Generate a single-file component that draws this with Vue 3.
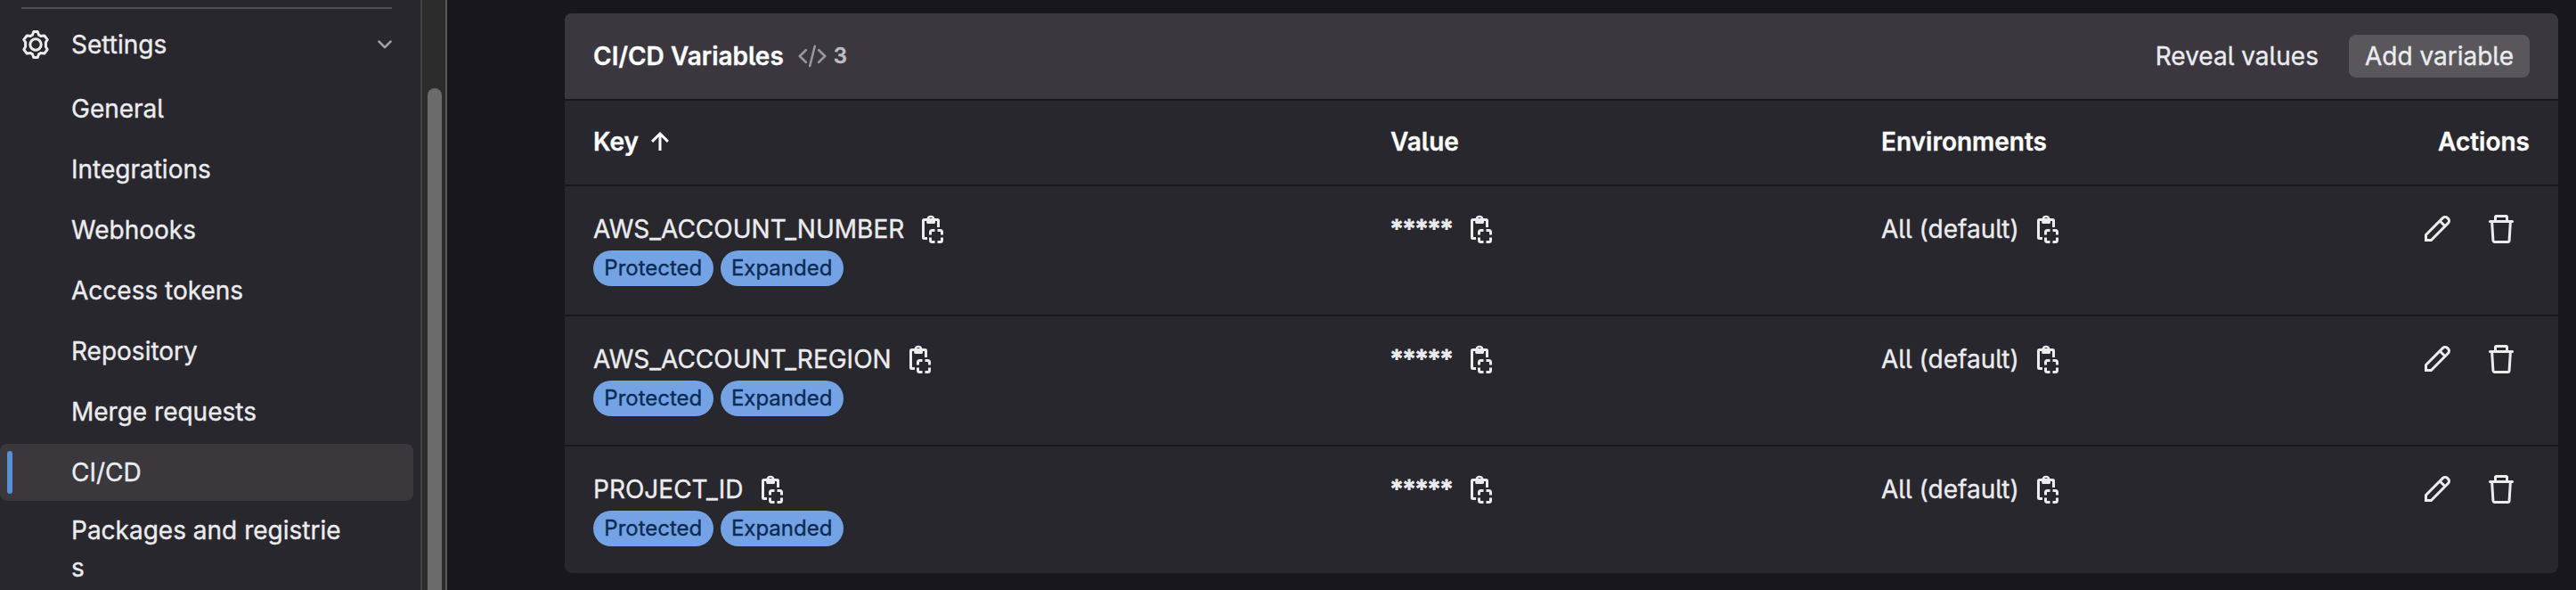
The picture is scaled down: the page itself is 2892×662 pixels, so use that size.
<script setup>
const navItems = [
  { label: 'General' },
  { label: 'Integrations' },
  { label: 'Webhooks' },
  { label: 'Access tokens' },
  { label: 'Repository' },
  { label: 'Merge requests' },
  { label: 'CI/CD', active: true },
  { label: 'Packages and registries' },
]
const variables = ['AWS_ACCOUNT_NUMBER', 'AWS_ACCOUNT_REGION', 'PROJECT_ID']
const tags = ['Protected', 'Expanded']
</script>

<template>
  <svg class="defs" aria-hidden="true">
    <symbol id="copy" viewBox="0 0 16 16">
      <g fill="none" stroke="currentColor" stroke-width="1.5">
        <path d="M5 13.25H3.25a.5.5 0 0 1-.5-.5v-9.5a.5.5 0 0 1 .5-.5h7.5a.5.5 0 0 1 .5.5V7" />
        <path d="M6.75 11.2V9.75a1 1 0 0 1 1-1h1.500M10.750 8.750h1.500a1 1 0 0 1 1 1V11.200M13.250 12.800v1.450a1 1 0 0 1-1 1h-1.500M9.250 15.250h-1.500a1 1 0 0 1-1-1V12.800" />
      </g>
      <path fill="currentColor" fill-rule="evenodd" d="M4.6 2h.2a2.3 2.3 0 0 1 4.4 0h.3v2.2a.8.8 0 0 1-.8.8H5.4a.8.8 0 0 1-.8-.8zM7 1.500a1 1 0 1 0 0 2 1 1 0 0 0 0-2z" />
    </symbol>
  </svg>
  <div class="page">
    <aside class="sidebar">
      <nav class="nav">
        <div class="rule"></div>
        <div class="section">
          <svg class="icon" viewBox="0 0 16 16" fill="none" stroke="currentColor" stroke-width="1.5" stroke-linejoin="round">
            <path d="M6.900.750h2.200L9.800 2.600 11 3.300 12.900 3 14.600 5.200 13.700 6.700V9.300L14.600 10.800 12.900 13 11 12.700 9.800 13.400 9.100 15.250H6.900L6.200 13.400 5 12.700 3.100 13 1.400 10.800 2.300 9.300V6.700L1.400 5.200 3.100 3 5 3.300 6.200 2.600z" />
            <circle cx="8" cy="8" r="3.1" />
          </svg>
          <span class="section-label">Settings</span>
          <svg class="chev" viewBox="0 0 16 10" fill="none" stroke="currentColor" stroke-width="2.6" stroke-linecap="round" stroke-linejoin="round"><path d="M1.5 1.6 8 8.100l6.500-6.500" /></svg>
        </div>
        <ul class="list">
          <li v-for="n in navItems" :key="n.label" class="item" :class="{ active: n.active }">
            <span class="item-label">{{ n.label }}</span>
          </li>
        </ul>
      </nav>
      <div class="track"><div class="thumb"></div></div>
    </aside>
    <main class="main">
      <section class="card">
        <header class="card-head">
          <h2 class="title">CI/CD Variables</h2>
          <svg class="icon code" viewBox="0 0 16 16" fill="none" stroke="currentColor" stroke-width="1.3" stroke-linecap="round" stroke-linejoin="round"><path d="M4.4 4.6.9 8l3.500 3.400M11.600 4.600 15.100 8l-3.500 3.400M9.400 2.400 6.600 13.500" /></svg>
          <span class="count">3</span>
          <button class="btn">Reveal values</button>
          <button class="btn filled">Add variable</button>
        </header>
        <div class="grid thead">
          <div class="key-head">Key
            <svg class="sort" viewBox="0 0 20 22" fill="none" stroke="currentColor" stroke-width="3"><path d="M10 21V2M1.100 10.900 10 2l8.900 8.900" /></svg>
          </div>
          <div>Value</div>
          <div>Environments</div>
          <div class="right">Actions</div>
        </div>
        <div v-for="v in variables" :key="v" class="grid row">
          <div>
            <div class="line"><span>{{ v }}</span><svg class="icon copy"><use href="#copy" /></svg></div>
            <div class="tags"><span v-for="t in tags" :key="t" class="tag">{{ t }}</span></div>
          </div>
          <div class="line"><span class="stars">*****</span><svg class="icon copy"><use href="#copy" /></svg></div>
          <div class="line"><span>All (default)</span><svg class="icon copy"><use href="#copy" /></svg></div>
          <div class="actions">
            <svg class="icon" viewBox="0 0 16 16" fill="none" stroke="currentColor" stroke-width="1.5"><path d="M1.750 14.250v-3L11.300 1.700a1.750 1.750 0 0 1 2.450 0l.500.500a1.750 1.750 0 0 1 0 2.450L4.700 14.250zM9.600 3.500l2.900 2.900" /></svg>
            <svg class="icon" viewBox="0 0 16 16" fill="none" stroke="currentColor" stroke-width="1.5"><path stroke-linecap="round" d="M1.750 3.750h12.500" /><path d="M4.750 3.750v-2.500a.500.500 0 0 1 .500-.500h5.500a.500.500 0 0 1 .500.500v2.500M2.800 3.750l.650 10.500a1 1 0 0 0 1 1h7.100a1 1 0 0 0 1-1l.650-10.500" /></svg>
          </div>
        </div>
      </section>
    </main>
  </div>
</template>

<style>
body { background: #18171d; overflow: hidden; }
</style>

<style scoped>
* { box-sizing: border-box; }
.defs { position: absolute; width: 0; height: 0; }
.page {
  display: flex;
  height: 662px;
  overflow: hidden;
  background: #18171d;
  color: #ececef;
  font: 400 28px/42px Inter, "Liberation Sans", sans-serif;
  font-feature-settings: "cv05";
  -webkit-text-stroke: 0.35px currentColor;
}
.sidebar { display: flex; flex: none; width: 502px; background: #28272d; border-right: 2px solid #5a5a5a; }
.nav { flex: 1; padding-top: 8px; }
.rule { height: 2px; margin: 0 32px 8px 24px; background: #4f4e56; }
.section { display: flex; align-items: center; height: 64px; padding: 0 32px 0 24px; }
.section-label { margin-left: 24px; flex: 1; }
.icon { display: block; flex: none; width: 32px; height: 32px; }
.chev { width: 16px; height: 10px; color: #a4a3a8; }
.list { list-style: none; margin: 8px 0 0; padding: 0; display: grid; gap: 4px; }
.item { display: flex; align-items: center; width: 464px; min-height: 64px; padding: 8px 80px; border-radius: 8px; }
.item-label { word-break: break-all; width: 306px; }
.active { background: #3a383d; position: relative; }
.active::before { content: ""; position: absolute; left: 8px; top: 8px; bottom: 8px; width: 6px; border-radius: 3px; background: #5a8fd8; }
.track { width: 28px; padding: 99px 4px 0 6px; background: #2c2c2c; border-left: 2px solid #424242; }
.thumb { width: 16px; height: 600px; border-radius: 8px; background: #6b6b6b; }
.main { flex: 1; padding: 15px 20px 0 132px; }
.card { height: 628px; border-radius: 8px; overflow: hidden; background: #28272d; }
.card-head { display: flex; align-items: center; height: 98px; padding: 0 32px; background: #3a373e; border-bottom: 2px solid #18171d; }
.title { margin: 0; font-size: 28px; font-weight: 600; color: #fff; }
.code { margin-left: 16px; color: #98979c; }
.count { margin-left: 8px; font-size: 24px; font-weight: 600; color: #bfbfc3; flex: 1; }
.btn { height: 48px; padding: 0 18px; border: 0; border-radius: 8px; background: none; color: #ececef; font: inherit; line-height: 48px; }
.filled { margin-left: 16px; background: #59575c; }
.grid { display: grid; grid-template-columns: 895px 551px 1fr 224px; padding: 0 32px; border-bottom: 2px solid #18171d; }
.thead { height: 96px; padding-bottom: 2px; align-items: center; font-weight: 600; color: #fff; }
.key-head { display: flex; align-items: center; }
.sort { width: 20px; height: 22px; margin-left: 14px; }
.right { text-align: right; }
.row { height: 146px; padding-top: 32px; align-items: start; }
.row:last-child { border-bottom: 0; }
.line { display: flex; align-items: center; height: 32px; }
.stars { -webkit-text-stroke-width: 1px; }
.copy { margin-left: 16px; }
.tags { display: flex; gap: 8px; margin-top: 8px; }
.tag { height: 40px; padding: 0 12.3px; border-radius: 20px; background: #73a3e4; color: #0b2a54; font-size: 24px; line-height: 39px; }
.actions { display: flex; justify-content: flex-end; gap: 40px; padding-right: 16px; }
</style>
